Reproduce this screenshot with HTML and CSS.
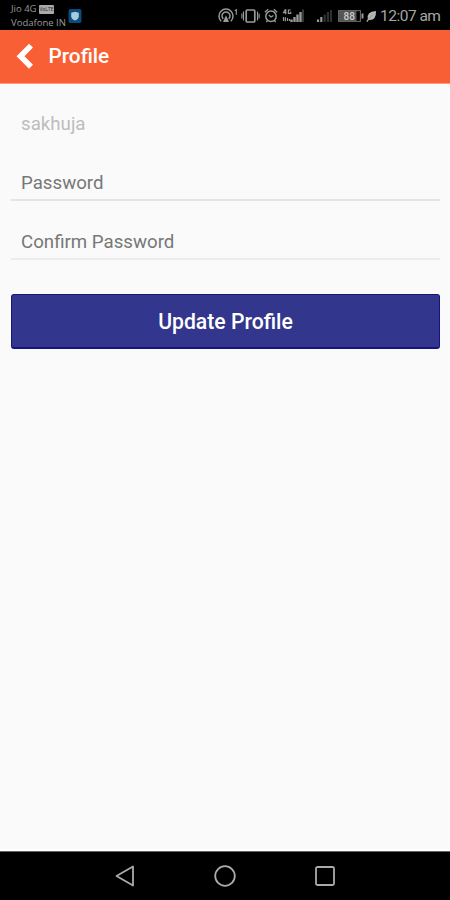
FILE: index.html
```html
<!DOCTYPE html>
<html lang="en">
<head>
<meta charset="utf-8">
<title>Profile</title>
<link rel="stylesheet" href="styles.css">
</head>
<body>
<div class="screen">
  <div class="status">
    <div class="carriers">
      <div class="carrier">Jio 4G <span class="volte">VoLTE</span></div>
      <div class="carrier">Vodafone IN</div>
    </div>
    <svg class="shield" width="14" height="16" viewBox="0 0 14 16">
      <rect x="0.5" y="1" width="13" height="14" rx="2" fill="#0d4b78"/>
      <path d="M7 3.800l3.800 1v3.400q0 2.800-3.800 4.200q-3.800-1.400-3.800-4.200V4.800z" fill="#a5cbe0"/>
    </svg>
    <svg class="indicators" width="160" height="20" viewBox="217 6 160 20" fill="none" stroke="#999" stroke-width="1.300">
      <path d="M221.200 21.200a7 7 0 1 1 9.600 0M223.300 18.900a4 4 0 1 1 5.400 0" stroke-width="1.500"/>
      <path d="M226 15.200l3 6.800h-6z" fill="#999" stroke="none"/>
      <path d="M234.800 10.700l1.500-1v5" stroke-width="1.100"/>
      <rect x="246.200" y="10" width="8.600" height="12" rx="1" stroke-width="1.700"/>
      <path d="M243.500 11.500v9M257.500 11.500v9M241.900 13.500v5M259.100 13.500v5" stroke-width="1.100"/>
      <circle cx="271" cy="16.300" r="5.200" stroke-width="1.500"/>
      <path d="M264.800 12.200l3.400-2.900M277.200 12.200l-3.400-2.900M268.800 15l2.200 2 2.500-1.500M267.500 20.500l-1.200 1.500M274.500 20.500l1.200 1.500"/>
      <path d="M285.500 9.300l-2 3.400h3M285.700 9.300v5M290.700 10h-2.300v3.300h2.300v-1.500M283.500 21v-4M285.400 17.200v4M287.500 21v-3M289.500 21v-2" stroke-width="1.200"/>
      <path d="M291.500 22v-2.500M294.500 22v-5M297.500 22v-7.500M300.500 22v-10" stroke-width="2.400"/>
      <path d="M303 22v-12.500" stroke="#444" stroke-width="1.600"/>
      <path d="M318 22v-2.500M321.300 22v-5" stroke-width="2.200"/>
      <path d="M324.700 22v-7.500M327.900 22v-10M331 22v-12" stroke="#303030" stroke-width="2.200"/>
      <rect x="338.600" y="10.600" width="21.800" height="10.800" stroke="#666" stroke-width="1.100"/>
      <path d="M339 11h17.500v10H339z" fill="#555" stroke="none"/>
      <path d="M362.500 13.500v5" stroke-width="2"/>
      <text x="343.500" y="19.700" class="charge">88</text>
      <path d="M366.300 21.300l1.500-2.100q-1.500-7.800 8.200-8.200q.4 9.700-7.200 8.900l-1.400 2z" fill="#b5b5b5" stroke="none"/>
      <path d="M368.500 19l4.500-4.500" stroke="#777" stroke-width=".5"/>
    </svg>
    <span class="clock">12:07 am</span>
  </div>
  <header class="appbar">
    <svg width="18" height="28" viewBox="0 0 18 28" fill="none" stroke="#fff" stroke-width="5.600">
      <path d="M15 3.600L4.500 14.200 15 24.800"/>
    </svg>
    <h1 class="title">Profile</h1>
  </header>
  <main class="form">
    <input class="field username" value="sakhuja" disabled>
    <input class="field password" placeholder="Password">
    <input class="field confirm" placeholder="Confirm Password">
    <button class="submit">Update Profile</button>
  </main>
  <nav class="navbar">
    <svg width="20" height="22" viewBox="0 0 20 22"><path d="M18 1.500v19L1.500 11z"/></svg>
    <svg width="22" height="22" viewBox="0 0 22 22"><circle cx="11" cy="11" r="9.800"/></svg>
    <svg width="20" height="20" viewBox="0 0 20 20"><rect x="1" y="1" width="18" height="18" rx="1.500"/></svg>
  </nav>
</div>
</body>
</html>
```
FILE: styles.css
```css
* { box-sizing: border-box; }
body { margin: 0; font-family: Roboto, sans-serif; }
.screen { width: 450px; height: 900px; display: flex; flex-direction: column; background: #fafafa; }
.status { height: 30px; flex: none; display: flex; background: #000; color: #999; }
.carriers { width: 58px; margin: 2px 0 0 11px; line-height: 14px; }
.carrier { height: 14px; white-space: nowrap; font-family: "Open Sans", sans-serif; font-size: 9.500px; }
.volte { display: inline-block; height: 9px; width: 15px; background: #aaa; color: #222; border-radius: 1px; font-size: 5px; line-height: 9px; text-align: center; vertical-align: 1px; }
.shield { margin: 8px 0 0 -1px; }
.indicators { margin: 6px 0 0 135px; }
.charge { font: 500 10px Roboto, sans-serif; fill: #ccc; stroke: none; }
.clock { margin-left: 3px; font-size: 15.500px; letter-spacing: -.5px; line-height: 33px; white-space: nowrap; color: #a6a6a6; }
.appbar { height: 54px; flex: none; display: flex; align-items: center; padding: 0 0 1px 16px; background: #f95f34; border-bottom: 1px solid #fb9a7e; }
.title { margin: 0 0 0 14.500px; font-size: 20.800px; font-weight: 500; line-height: 28px; color: #fff; }
.form { flex: 1; display: flex; flex-direction: column; padding: 10px 10px 0 11px; border-bottom: 2px solid #fff; }
.field { width: 100%; height: 48px; margin: 0 0 11px; padding: 14px 0 0 10px; border: 0; border-bottom: 2px solid #e5e5e5; background: transparent; font: 18.700px Roboto, sans-serif; outline: 0; }
.username { border-color: transparent; color: #bdbdbd; }
.field::placeholder { color: #777; opacity: 1; }
.confirm { border-bottom-color: #ececec; }
.submit { height: 55px; margin-top: 23px; padding: 0; border: 1px solid #15157c; border-bottom-width: 2px; border-radius: 3px; background: #32368c; color: #fff; font: 500 21.200px Roboto, sans-serif; }
.navbar { height: 49px; flex: none; display: flex; align-items: center; padding-left: 115px; gap: 79px; background: #000; border-top: 1px solid #666; }
.navbar svg { fill: none; stroke: #aaa; stroke-width: 1.800; stroke-linejoin: round; }
```
